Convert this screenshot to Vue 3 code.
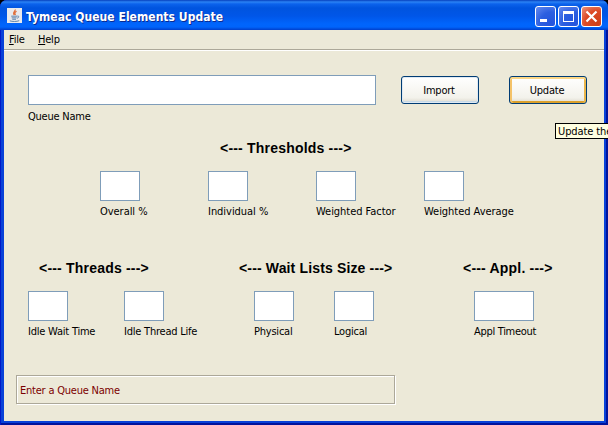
<script setup>
import { ref } from 'vue'

const queueName = ref('')
const thresholds = ['Overall %', 'Individual %', 'Weighted Factor', 'Weighted Average']
const groups = [
  { key: 'threads', title: '<--- Threads --->', fields: ['Idle Wait Time', 'Idle Thread Life'] },
  { key: 'waits', title: '<--- Wait Lists Size --->', fields: ['Physical', 'Logical'] },
  { key: 'appl', title: '<--- Appl. --->', fields: ['Appl Timeout'] },
]
</script>

<template>
  <div class="window">
    <header class="titlebar">
      <svg class="java" viewBox="0 0 16 16">
        <rect width="16" height="16" fill="#e9eaec" />
        <path d="M8.7 1.5C9.5 3.2 5.5 4 7.5 7.5M10.2 3.5C7.5 5 8.3 5.8 9 7.5" fill="none" stroke="#e0703c" stroke-width="1.4" />
        <path d="M4.5 8.7h6.2M5 10.5h5.2M5.6 12h4M11 8.6c2.2-.3 2 1.7-.2 2.3M3 13.7c2.5.9 7.5.9 10-.2" fill="none" stroke="#557da6" stroke-width="1" />
      </svg>
      <h1>Tymeac Queue Elements Update</h1>
      <div class="controls">
        <button class="ctl"><svg viewBox="0 0 21 21"><path d="M5 13h7v3H5z" fill="#fff" /></svg></button>
        <button class="ctl"><svg viewBox="0 0 21 21"><path d="M5 5h11v11H5zM6 8v7h9V8z" fill="#fff" fill-rule="evenodd" /></svg></button>
        <button class="ctl close"><svg viewBox="0 0 21 21"><path d="M5.5 5.5l10 10M15.5 5.5l-10 10" stroke="#fff" stroke-width="2.2" /></svg></button>
      </div>
    </header>
    <nav class="menu">
      <span class="m-file"><u>F</u>ile</span><span class="m-help"><u>H</u>elp</span>
    </nav>
    <main>
      <section class="top">
        <label class="field queue"><input v-model="queueName" type="text"><span>Queue Name</span></label>
        <button class="btn import">Import</button>
        <button class="btn update">Update</button>
      </section>
      <h2 class="thresh-title">&lt;--- Thresholds ---&gt;</h2>
      <section class="thresholds">
        <label v-for="t in thresholds" :key="t" class="field"><input type="text"><span>{{ t }}</span></label>
      </section>
      <section class="groups">
        <div v-for="g in groups" :key="g.key" :class="g.key">
          <h2>{{ g.title }}</h2>
          <div class="fields">
            <label v-for="f in g.fields" :key="f" class="field"><input type="text"><span>{{ f }}</span></label>
          </div>
        </div>
      </section>
      <p class="status">Enter a Queue Name</p>
    </main>
    <div class="tooltip">Update the</div>
  </div>
</template>

<style>
body { margin: 0; background: #000; overflow: hidden; }
</style>

<style scoped>
* { box-sizing: border-box; }
.window {
  position: relative; display: flex; flex-direction: column;
  width: 608px; height: 425px; padding: 0 4px 4px; overflow: hidden;
  background: #0841d8; border-radius: 7px 7px 0 0;
  box-shadow: inset 1px 0 #0019c8, inset -2px -2px #00139c;
  font: 11px/14px "DejaVu Sans Condensed", "DejaVu Sans", sans-serif;
  font-stretch: condensed; letter-spacing: -0.22px; color: #000;
}
.titlebar {
  display: flex; align-items: center; flex: none; height: 30px; margin: 0 -4px; padding: 3px 6px 0 7px;
  background: linear-gradient(#0640bd 0, #2a83f5 2px, #0b62ec 4px, #0054df 8px, #0056e8 16px, #0065fc 24px, #0064fb 27px, #003fcb 30px);
}
.java { width: 15px; height: 15px; margin-top: -2px; }
h1 {
  flex: 1; margin: 1px 0 0 4px; font-size: 12px; line-height: 16px; letter-spacing: 0.04px;
  white-space: nowrap; color: #fff; text-shadow: 1px 1px #0a2a90;
}
.controls { display: flex; gap: 2px; }
.ctl {
  width: 21px; height: 21px; padding: 0; border: 1px solid #fff; border-radius: 3px;
  background: radial-gradient(circle at 80% 85%, #2455dd, #2c5fe0 50%, #668bef);
}
.ctl svg { display: block; width: 21px; height: 21px; margin: -1px; }
.close { background: radial-gradient(circle at 80% 85%, #d04018, #dc4a26 55%, #ee967e); }
.menu {
  display: flex; flex: none; height: 21px; padding: 3px 5px 0; background: #ece9d8;
  border-bottom: 1px solid #fff; box-shadow: inset 0 -1px #aca899;
}
.m-file { width: 29px; }
main { flex: 1; background: #ece9d8; }
.field { display: block; width: 40px; }
.field input {
  display: block; width: 100%; height: 30px; padding: 2px 4px; border: 1px solid #7f9db9;
  border-radius: 0; background: #fff; font: inherit; outline: none;
}
.field span { display: block; height: 14px; margin-top: 4px; white-space: nowrap; }
.top { display: flex; align-items: flex-start; height: 88px; padding: 24px 0 0 24px; }
.queue { width: 348px; }
.queue span { margin-top: 5px; }
.btn {
  width: 78px; height: 28px; margin-top: 1px; padding: 2px 2px 0 0; border: 1px solid #003c74; border-radius: 3px;
  background: linear-gradient(#fff, #f3f2eb 80%, #dcd8cc); font: inherit; letter-spacing: inherit; color: #000;
}
.import { margin-left: 25px; box-shadow: inset 0 0 0 1px #dfe9f2, inset 0 -2px #c7d9e6; }
.update { margin-left: 30px; box-shadow: inset 0 2px #fbd685, inset 2px 0 #f4c268, inset -2px 0 #eab64c, inset 0 -2px #dba02c; }
h2 { margin: 0; font: bold 14px/18px "Liberation Sans", Arial, sans-serif; letter-spacing: 0.2px; white-space: nowrap; }
.thresh-title { padding-left: 216px; }
.thresholds { display: flex; gap: 68px; padding: 14px 0 0 96px; letter-spacing: -0.04px; }
.groups { display: grid; grid-template-columns: 211px 224px 1fr; margin-top: 40px; padding-left: 24px; }
.groups h2 { margin-bottom: 14px; }
.fields { display: flex; }
.threads h2 { padding-left: 11px; }
.threads .fields { gap: 56px; }
.waits h2 { letter-spacing: 0.15px; }
.waits .fields { gap: 40px; padding-left: 15px; }
.appl .fields { padding-left: 11px; }
.appl .field { width: 60px; }
.appl .field span { letter-spacing: -0.3px; }
.status {
  width: 379px; height: 29px; margin: 36px 0 0 12px; padding: 8px 3px 0; color: #7b0000;
  border: 1px solid #aca899; box-shadow: 1px 1px #fff, inset 1px 1px #fff;
}
.tooltip {
  position: absolute; left: 555px; top: 123px; width: 70px; height: 16px; padding: 1px 2px 0;
  border: 1px solid #000; background: #ffffe1; line-height: 13px; letter-spacing: -0.1px; white-space: nowrap;
}
</style>
